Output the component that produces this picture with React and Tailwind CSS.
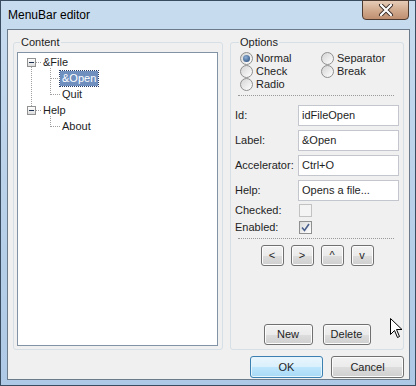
import React from "react";

const btn =
  "flex items-center justify-center rounded-[3px] border border-[#707070] bg-[linear-gradient(180deg,#f2f2f2_0%,#ebebeb_50%,#dddddd_51%,#cfcfcf_100%)] shadow-[inset_0_0_0_1px_#fcfcfc] text-[11px] text-[#1e1e1e]";

const Radio = ({ label, checked }) => (
  <div className="flex items-center h-[13px] gap-[3px]">
    <span className="w-[13px] h-[13px] rounded-full border border-[#8e8f8f] bg-[linear-gradient(135deg,#d4d4d4,#ffffff)] flex items-center justify-center">
      {checked && (
        <span className="w-[7px] h-[7px] rounded-full bg-[radial-gradient(circle_at_40%_35%,#8fb1d8,#1f4373)]" />
      )}
    </span>
    <span>{label}</span>
  </div>
);

const Field = ({ label, value }) => (
  <div className="flex items-center h-[21px]">
    <span className="w-[63px]">{label}</span>
    <div className="w-[101px] h-[21px] border border-[#c3c6cc] bg-white pl-[3px] flex items-center">
      {value}
    </div>
  </div>
);

const CheckRow = ({ label, checked, disabled }) => (
  <div className="flex items-center h-[17px]">
    <span className="w-[64px]">{label}</span>
    <span
      className={
        disabled
          ? "w-[13px] h-[13px] border border-[#c2c2c2] bg-[#f4f4f4]"
          : "w-[13px] h-[13px] border border-[#8e8f8f] bg-[linear-gradient(135deg,#dadada,#ffffff)] flex items-center justify-center"
      }
    >
      {checked && (
        <svg width="9" height="9" viewBox="0 0 9 9">
          <path d="M1 4.5 L3.5 7.5 L8 1" fill="none" stroke="#4a5f8c" strokeWidth="1.6" />
        </svg>
      )}
    </span>
  </div>
);

const TreeRow = ({ level, label, selected }) => (
  <div className="flex items-center h-[16px]">
    {level === 0 ? (
      <>
        <span className="ml-[9px] w-[9px] h-[9px] border border-[#919191] bg-[linear-gradient(180deg,#ffffff,#dcdcdc)] flex items-center justify-center">
          <span className="w-[5px] h-[1px] bg-[#1e3050]" />
        </span>
        <span className="ml-[7px]">{label}</span>
      </>
    ) : (
      <span
        className={
          selected
            ? "ml-[42px] px-[2px] h-[15px] leading-[15px] bg-[#6f8fbf] text-white outline outline-1 outline-dotted outline-[#2b3f66]"
            : "ml-[42px] px-[2px]"
        }
      >
        {label}
      </span>
    )}
  </div>
);

const TreeLines = () => (
  <svg className="absolute inset-0 pointer-events-none" width="199" height="292" shapeRendering="crispEdges">
    <g stroke="#a0a0a0" strokeWidth="1" strokeDasharray="1 1">
      <line x1="18" y1="9.5" x2="24" y2="9.5" />
      <line x1="13.5" y1="14" x2="13.5" y2="53" />
      <line x1="32.5" y1="15" x2="32.5" y2="42" />
      <line x1="33" y1="25.5" x2="42" y2="25.5" />
      <line x1="33" y1="41.5" x2="42" y2="41.5" />
      <line x1="18" y1="57.5" x2="24" y2="57.5" />
      <line x1="32.5" y1="63" x2="32.5" y2="74" />
      <line x1="33" y1="73.5" x2="42" y2="73.5" />
    </g>
  </svg>
);

export default function App() {
  return (
    <div className="relative w-[416px] h-[386px] border border-[#3a4c60] bg-[linear-gradient(180deg,#c8dcef_0%,#bcd3ea_40%,#aec9e6_100%)] pl-[6px] pr-[5px] pb-[5px] flex flex-col font-['Liberation_Sans',Arial,sans-serif] text-[11px] text-[#1e1e1e]">
      <div className="h-[28px] flex items-start">
        <span className="ml-[1px] self-center text-[12px] text-black">MenuBar editor</span>
        <div className="ml-auto -mt-[1px] mr-[1px] w-[47px] h-[20px] rounded-b-[4px] border border-[#4d3a30] bg-[linear-gradient(180deg,#e6ccb8_0%,#d2ab8e_50%,#bf8f70_100%)] flex items-center justify-center">
          <svg width="16" height="12" viewBox="0 0 16 12">
            <path d="M3 1 L13 11 M13 1 L3 11" stroke="#3b2d28" strokeWidth="4" strokeLinecap="round" />
            <path d="M3 1 L13 11 M13 1 L3 11" stroke="#ffffff" strokeWidth="2.2" strokeLinecap="round" />
          </svg>
        </div>
      </div>

      <div className="flex-1 border border-[#6b7b8c] bg-[#f0f0f0] flex flex-col">
        <div className="flex mt-[12px] ml-[5px] gap-[7px]">
          {/* Content group */}
          <div className="relative w-[210px] h-[308px] rounded-[3px] border border-[#d5dfe5]">
            <span className="absolute left-[6px] -top-[7px] px-[1px] leading-[13px] bg-[#f0f0f0]">Content</span>
            <div className="relative ml-[3px] mt-[9px] w-[201px] h-[294px] border border-[#8293a6] bg-white pt-[1px]">
              <TreeLines />
              <TreeRow level={0} label="&File" />
              <TreeRow level={1} label="&Open" selected />
              <TreeRow level={1} label="Quit" />
              <TreeRow level={0} label="Help" />
              <TreeRow level={1} label="About" />
            </div>
          </div>

          {/* Options group */}
          <div className="relative w-[174px] h-[308px] rounded-[3px] border border-[#d5dfe5] flex flex-col">
            <span className="absolute left-[8px] -top-[7px] px-[1px] leading-[13px] bg-[#f0f0f0]">Options</span>
            <div className="mt-[9px] pl-[9px] grid grid-cols-[81px_1fr]">
              <Radio label="Normal" checked />
              <Radio label="Separator" />
              <Radio label="Check" />
              <Radio label="Break" />
              <Radio label="Radio" />
            </div>
            <div className="mt-[4px] ml-[7px] mr-[9px] border-t border-dotted border-[#9a9a9a]" />
            <div className="mt-[9px] pl-[4px] flex flex-col gap-[4px]">
              <Field label="Id:" value="idFileOpen" />
              <Field label="Label:" value="&Open" />
              <Field label="Accelerator:" value="Ctrl+O" />
              <Field label="Help:" value="Opens a file..." />
            </div>
            <div className="mt-[1px] pl-[4px] flex flex-col">
              <CheckRow label="Checked:" disabled />
              <CheckRow label="Enabled:" checked />
            </div>
            <div className="mt-[2px] ml-[7px] mr-[9px] border-t border-dotted border-[#9a9a9a]" />
            <div className="mt-[6px] flex justify-center gap-[7px]">
              <div className={`${btn} w-[23px] h-[21px]`}>&lt;</div>
              <div className={`${btn} w-[23px] h-[21px]`}>&gt;</div>
              <div className={`${btn} w-[23px] h-[21px]`}>^</div>
              <div className={`${btn} w-[23px] h-[21px]`}>v</div>
            </div>
            <div className="mt-auto mb-[4px] flex justify-center gap-[10px]">
              <div className={`${btn} w-[49px] h-[21px]`}>New</div>
              <div className={`${btn} w-[48px] h-[21px]`}>Delete</div>
            </div>
          </div>
        </div>

        <div className="mt-[6px] mr-[5px] flex justify-end gap-[8px]">
          <div className="w-[73px] h-[22px] rounded-[3px] border border-[#3c7fb1] bg-[linear-gradient(180deg,#eaf6fd_0%,#d9f0fc_50%,#bee6fd_51%,#a7d9f5_100%)] shadow-[inset_0_0_0_1px_#e6f4fc] flex items-center justify-center">
            OK
          </div>
          <div className={`${btn} w-[73px] h-[22px]`}>Cancel</div>
        </div>
      </div>

      <svg className="absolute left-[389px] top-[317px]" width="13" height="21" viewBox="0 0 13 21">
        <path
          d="M0.5 0.5 L0.5 16.5 L4.5 12.5 L7.5 19.5 L9.5 18.5 L6.5 11.5 L12 11.5 Z"
          fill="#ffffff"
          stroke="#000000"
          strokeWidth="1"
        />
      </svg>
    </div>
  );
}
